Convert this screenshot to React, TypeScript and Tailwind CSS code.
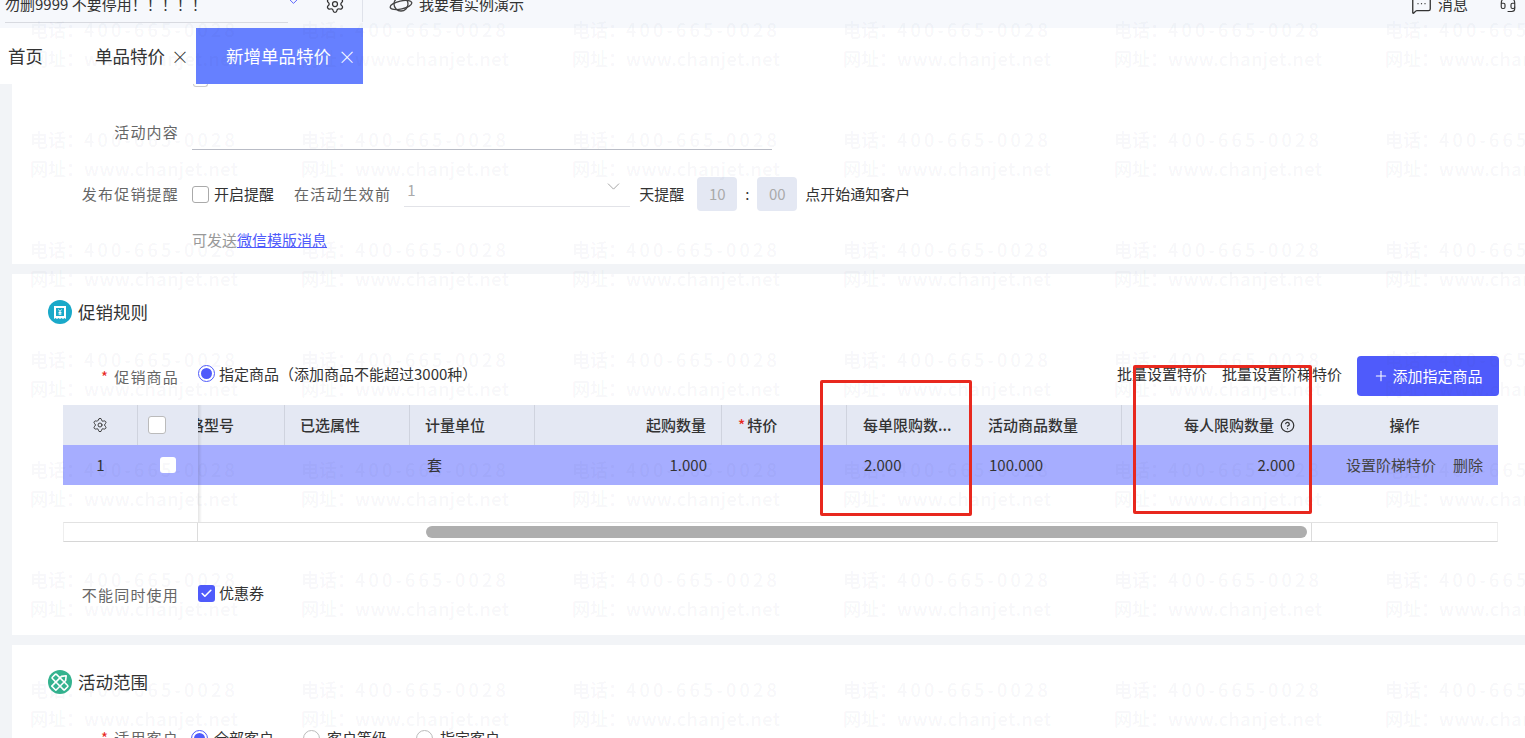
import { ChevronDown, CircleHelp, Headset, MessageSquareMore, Plus, Settings, Check } from 'lucide-react';
import type { ReactNode } from 'react';

// ---- Repeating watermark ---------------------------------------------------

function Watermark() {
  const rows = [0, 1, 2, 3, 4, 5, 6];
  const cols = [0, 1, 2, 3, 4, 5];
  return (
    <div className="pointer-events-none absolute inset-0 overflow-hidden pl-[30px] pt-[14px] text-[18px] font-medium leading-[30px] text-[rgba(50,60,100,0.055)]">
      {rows.map((r) => (
        <div key={r} className="flex h-[110px] w-[1700px]">
          {cols.map((c) => (
            <div key={c} className="w-[271px] shrink-0 whitespace-nowrap">
              <div>
                电话：<span className="tracking-[3.2px]">400-665-0028</span>
              </div>
              <div className="-mt-px">
                网址：<span className="tracking-[0.5px]">www.chanjet.net</span>
              </div>
            </div>
          ))}
        </div>
      ))}
    </div>
  );
}

// ---- Small form pieces -----------------------------------------------------

function Label({ children, required }: { children: ReactNode; required?: boolean }) {
  return (
    <div className="w-[167px] shrink-0 text-right text-[15px] tracking-[1.2px] text-[#666]">
      {required && <span className="mr-[5px] text-[#e8281e]">*</span>}
      {children}
    </div>
  );
}

function Radio({ checked }: { checked?: boolean }) {
  return (
    <span
      className={
        checked
          ? 'flex h-[17px] w-[17px] shrink-0 items-center justify-center rounded-full border border-[#4f5bfb] bg-white'
          : 'block h-[17px] w-[17px] shrink-0 rounded-full border border-[#bbb] bg-white'
      }
    >
      {checked && <span className="h-[11px] w-[11px] rounded-full bg-[#4f5bfb]" />}
    </span>
  );
}

function SectionTitle({ icon, color, title }: { icon: ReactNode; color: string; title: string }) {
  return (
    <div className="flex items-center pl-[36px]">
      <span className={`flex h-[24px] w-[24px] items-center justify-center rounded-full ${color}`}>{icon}</span>
      <span className="ml-[6px] text-[17.5px] text-[#333]">{title}</span>
    </div>
  );
}

// ---- Table -----------------------------------------------------------------

const GRID = 'grid grid-cols-[75px_60px_87px_125px_125px_187px_125px_126px_149px_189px_187px]';

function HeaderCell({ children, className = '' }: { children?: ReactNode; className?: string }) {
  return (
    <div className={`flex items-center overflow-hidden whitespace-nowrap border-r border-[#cfd3de] text-[15px] font-medium text-[#333] ${className}`}>
      {children}
    </div>
  );
}

function PromoTable() {
  return (
    <div className="relative ml-[51px] w-[1435px] text-[15px] text-[#333]">
      <div className={`${GRID} h-[40px] bg-[#e4e8f3]`}>
        <HeaderCell className="justify-center">
          <Settings size={16} strokeWidth={1.4} />
        </HeaderCell>
        <HeaderCell className="border-r-0 pl-[10px]">
          <span className="h-[18px] w-[18px] rounded-[3px] border border-[#bbb] bg-white" />
        </HeaderCell>
        <HeaderCell className="justify-end pr-[50px]">
          <span className="w-[37px] overflow-hidden whitespace-nowrap [direction:rtl]">规格型号</span>
        </HeaderCell>
        <HeaderCell className="pl-[15px]">已选属性</HeaderCell>
        <HeaderCell className="pl-[15px]">计量单位</HeaderCell>
        <HeaderCell className="justify-end pr-[15px]">起购数量</HeaderCell>
        <HeaderCell className="pl-[16px]">
          <span className="mr-[2px] text-[#e8281e]">*</span>特价
        </HeaderCell>
        <HeaderCell className="border-r-0 pl-[16px]">每单限购数...</HeaderCell>
        <HeaderCell className="pl-[15px]">活动商品数量</HeaderCell>
        <HeaderCell className="justify-end border-r-0 pr-[16px]">
          每人限购数量
          <CircleHelp size={15} strokeWidth={2} className="ml-[6px]" />
        </HeaderCell>
        <HeaderCell className="justify-center border-r-0">操作</HeaderCell>
      </div>

      <div className={`${GRID} h-[40px] items-center bg-[#a6adff]`}>
        <div className="text-center">1</div>
        <div className="pl-[22px]">
          <span className="block h-[16px] w-[16px] rounded-[3px] bg-white" />
        </div>
        <div />
        <div />
        <div className="pl-[17px]">套</div>
        <div className="pr-[15px] text-right">1.000</div>
        <div />
        <div className="pl-[17px]">2.000</div>
        <div className="pl-[16px]">100.000</div>
        <div className="pr-[16px] text-right">2.000</div>
        <div className="flex justify-end gap-[17px] whitespace-nowrap pr-[15px] text-[#444]">
          <span>设置阶梯特价</span>
          <span>删除</span>
        </div>
      </div>

      <div className="h-[37px]" />

      <div className="flex h-[20px] border border-x-[#eeeeee] border-b-[#d6d6d6] border-t-[#e2e2e2]">
        <div className="w-[134px] shrink-0 border-r border-[#dcdcdc]" />
        <div className="flex-1 pl-[228px] pt-[3px]">
          <div className="h-[12px] w-[881px] rounded-full bg-[#aeaeae]" />
        </div>
        <div className="w-[186px] shrink-0 border-l border-[#dcdcdc]" />
      </div>

      {/* fixed column shadow */}
      <div className="absolute bottom-[20px] left-[135px] top-0 w-[4px] bg-gradient-to-r from-[rgba(0,0,0,0.1)] to-transparent" />
    </div>
  );
}

// ---- Page ------------------------------------------------------------------

export default function App() {
  return (
    <div className="relative flex h-[738px] w-[1525px] flex-col overflow-hidden bg-white font-['Noto_Sans_CJK_SC','Liberation_Sans',sans-serif]">
      {/* Top bar, scrolled so that only its lower part shows */}
      <div className="relative h-[28px] shrink-0 overflow-hidden bg-[#f6f8fc]">
        <div className="-mt-[14px] flex h-[36px] items-center text-[15px] text-[#333]">
          <div className="relative flex h-[36px] w-[306px] items-center pl-[5px]">
            勿删9999 不要停用！！！！！
            <ChevronDown size={15} strokeWidth={1.5} className="absolute left-[286px] top-[8px] text-[#4f5bfb]" />
          </div>
          <Settings size={20} strokeWidth={1.5} className="ml-[19px]" />
          <span className="ml-[17px] h-[36px] w-px bg-[#dfe2ea]" />
          <svg viewBox="0 0 24 24" className="ml-[26px] h-[24px] w-[24px]" fill="none" stroke="#444" strokeWidth="1.3">
            <circle cx="12" cy="12" r="7" />
            <ellipse cx="12" cy="13" rx="11" ry="4" transform="rotate(-12 12 13)" />
          </svg>
          <span className="ml-[6px]">我要看实例演示</span>
          <MessageSquareMore size={21} strokeWidth={1.5} className="ml-[887px]" />
          <span className="ml-[6px]">消息</span>
          <Headset size={18} strokeWidth={1.5} className="ml-[31px] shrink-0" />
        </div>
        <div className="absolute left-[5px] top-[22px] h-px w-[283px] bg-[#d8dae0]" />
      </div>

      {/* Tabs */}
      <div className="flex h-[56px] shrink-0 items-center bg-white text-[17.5px] text-[#333]">
        <span className="ml-[8px]">首页</span>
        <span className="ml-[52px]">单品特价</span>
        <span className="ml-[6px] w-[12px] text-center text-[18px] font-light">×</span>
        <div className="ml-[13px] flex h-full w-[167px] items-center bg-[#6680ff] pl-[30px] text-white">
          新增单品特价
          <span className="ml-[7px] w-[12px] text-center text-[18px] font-light">×</span>
        </div>
      </div>

      {/* Scrolling content */}
      <div className="flex flex-1 flex-col gap-[10px] overflow-hidden bg-[#f2f4f7] pl-[12px]">
        {/* Card: activity info */}
        <div className="h-[180px] shrink-0 bg-white">
          <div className="ml-[181px] h-[3px] w-[15px] rounded-b-[3px] border border-t-0 border-[#ccc]" />
          <div className="mt-[34px] flex h-[29px] items-center">
            <div className="-mt-[7px]">
              <Label>活动内容</Label>
            </div>
            <div className="ml-[13px] h-[29px] w-[580px] border-b border-[#b9bcc6]" />
          </div>
          <div className="mt-[26px] flex h-[36px] items-center text-[15px] text-[#333]">
            <Label>发布促销提醒</Label>
            <span className="ml-[13px] h-[17px] w-[17px] rounded-[3px] border border-[#aaa]" />
            <span className="ml-[5px]">开启提醒</span>
            <span className="ml-[20px] tracking-[1.2px] text-[#666]">在活动生效前</span>
            <div className="relative -mt-[4px] ml-[13px] h-[30px] w-[226px] border-b border-[#e2e3e8] pl-[3px] pt-[2px] text-[#aaa]">
              1
              <ChevronDown size={21} strokeWidth={1} className="absolute -top-[1px] right-[6px] text-[#999]" />
            </div>
            <span className="ml-[9px]">天提醒</span>
            <span className="ml-[13px] flex h-[34px] w-[40px] items-center justify-center rounded-[4px] bg-[#e4e8f3] text-[#aaa]">10</span>
            <span className="w-[20px] text-center">:</span>
            <span className="flex h-[34px] w-[40px] items-center justify-center rounded-[4px] bg-[#e4e8f3] text-[#aaa]">00</span>
            <span className="ml-[8px]">点开始通知客户</span>
          </div>
          <div className="ml-[180px] mt-[17px] text-[15px] text-[#999]">
            可发送<span className="text-[#4f5bfb] underline">微信模版消息</span>
          </div>
        </div>

        {/* Card: promotion rules */}
        <div className="h-[361px] shrink-0 bg-white">
          <div className="pt-[25px]">
            <SectionTitle
              color="bg-[#1aa9c9]"
              title="促销规则"
              icon={
                <svg viewBox="0 0 14 15" className="h-[15px] w-[14px]">
                  <path d="M1 1h12v13l-1.5-1-1.5 1-1.5-1-1.5 1-1.5-1-1.5 1-1.5-1-1.5 1z" fill="white" />
                  <rect x="3" y="3" width="8" height="8" fill="#1aa9c9" />
                  <path d="M5.5 4.5L7 6.5l1.5-2M7 6.5V10M5.5 7.5h3M5.5 9h3" fill="none" stroke="white" strokeWidth="0.9" />
                </svg>
              }
            />
          </div>
          <div className="mt-[31px] flex h-[40px] items-center text-[15px] text-[#333]">
            <div className="mt-[1px]">
              <Label required>促销商品</Label>
            </div>
            <div className="-mt-[5px] ml-[19px] flex items-center">
              <Radio checked />
              <span className="ml-[4px]">指定商品（添加商品不能超过3000种）</span>
            </div>
            <div className="ml-auto mr-[26px] flex items-center gap-[15px]">
              <div className="-mt-[4px] flex gap-[15px]">
                <span>批量设置特价</span>
                <span>批量设置阶梯特价</span>
              </div>
              <button className="flex h-[40px] w-[142px] items-center justify-center rounded-[4px] bg-[#4f5bfb] text-white">
                <Plus size={16} strokeWidth={1.6} className="mr-[3px]" />
                添加指定商品
              </button>
            </div>
          </div>
          <div className="mt-[9px]">
            <PromoTable />
          </div>
          <div className="mt-[42px] flex items-center text-[15px] text-[#333]">
            <Label>不能同时使用</Label>
            <span className="-mt-[4px] ml-[19px] flex h-[17px] w-[17px] items-center justify-center rounded-[3px] bg-[#4f5bfb]">
              <Check size={13} strokeWidth={3} className="text-white" />
            </span>
            <span className="-mt-[4px] ml-[4px]">优惠券</span>
          </div>
        </div>

        {/* Card: activity scope */}
        <div className="flex-1 bg-white">
          <div className="pt-[24px]">
            <SectionTitle
              color="bg-[#34b38f]"
              title="活动范围"
              icon={
                <svg viewBox="0 0 24 24" className="h-[20px] w-[20px]" fill="none" stroke="white" strokeWidth="1.9" strokeLinejoin="round">
                  <rect x="8.5" y="1.5" width="7" height="21" rx="1" transform="rotate(-45 12 12)" />
                  <path d="M8.5 6L12 1.5 15.5 6v16.5h-7z" transform="rotate(45 12 12)" />
                </svg>
              }
            />
          </div>
          <div className="mt-[31px] flex h-[24px] items-center text-[15px] text-[#333]">
            <Label required>适用客户</Label>
            <div className="ml-[12px] flex items-center">
              <Radio checked />
              <span className="ml-[6px]">全部客户</span>
              <span className="ml-[29px]">
                <Radio />
              </span>
              <span className="ml-[7px]">客户等级</span>
              <span className="ml-[29px]">
                <Radio />
              </span>
              <span className="ml-[7px]">指定客户</span>
            </div>
          </div>
        </div>
      </div>

      <Watermark />

      {/* Red annotation boxes drawn over the screenshot */}
      <div className="pointer-events-none absolute left-[820px] top-[380px] h-[136px] w-[152px] rounded-[2px] border-[3px] border-[#e8281e]" />
      <div className="pointer-events-none absolute left-[1133px] top-[365px] h-[149px] w-[179px] rounded-[2px] border-[3px] border-[#e8281e]" />
    </div>
  );
}
